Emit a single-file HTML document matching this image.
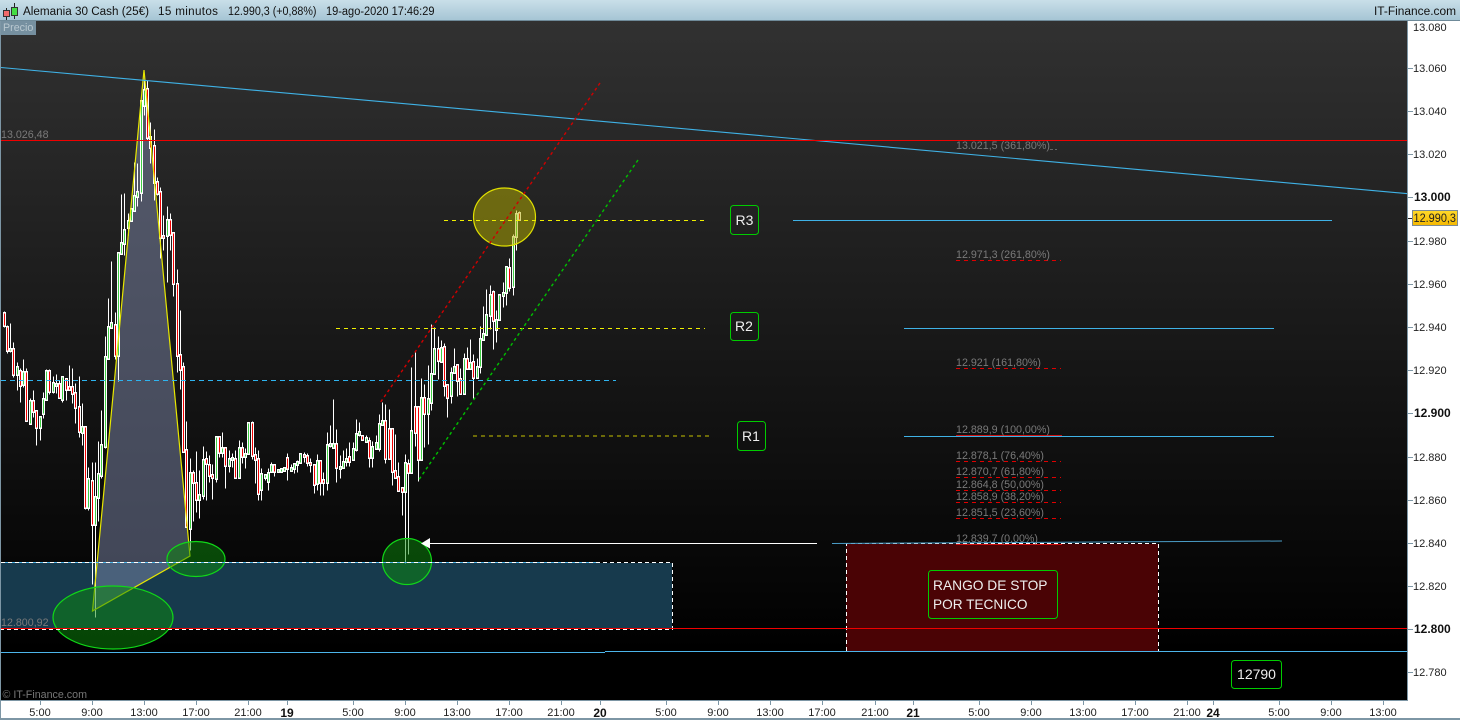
<!DOCTYPE html>
<html lang="es">
<head>
<meta charset="utf-8">
<title>Alemania 30 Cash</title>
<style>
html,body{margin:0;padding:0;background:#fff;width:1460px;height:720px;overflow:hidden}
svg{display:block;font-family:"Liberation Sans",sans-serif}
.ax{font-size:11px;fill:#222;text-anchor:middle}
.axb{font-size:12px;fill:#111;font-weight:bold;text-anchor:middle}
.pr{font-size:11px;fill:#222}
.fb{font-size:10.7px;fill:#7a7a7a}
.ti{font-size:11.65px;fill:#111}
.bx{fill:none;stroke:#0c0;stroke-width:1}
.wt{font-size:14px;fill:#eee}
</style>
</head>
<body>
<svg width="1460" height="720" viewBox="0 0 1460 720" xmlns="http://www.w3.org/2000/svg">
<defs>
<linearGradient id="bg" x1="0" y1="21" x2="0" y2="652" gradientUnits="userSpaceOnUse"><stop offset="0" stop-color="#313131"/><stop offset="1" stop-color="#000"/></linearGradient>
<linearGradient id="top" x1="0" y1="0" x2="0" y2="20" gradientUnits="userSpaceOnUse"><stop offset="0" stop-color="#c9dfe9"/><stop offset="1" stop-color="#a6c5d5"/></linearGradient>
<linearGradient id="gold" x1="0" y1="0" x2="0" y2="1"><stop offset="0" stop-color="#ffd92a"/><stop offset="1" stop-color="#f5b800"/></linearGradient>
<path id="G" d="M10 349V350M17 367V374M23 372V384M30 401V423M40 417V427M43 399V413M46 371V399M53 383V391M56 384V385M62 377V399M82 427V432M88 479V507M95 497V524M98 474V497M101 445V475M105 357V446M108 327V358M111 323V327M118 253V355M121 243V253M124 230V243M128 221V227M131 209V220M134 196V210M137 192V196M141 101V192M144 90V105M167 220V235M190 473V528M199 495V499M203 460V495M216 437V478M222 448V452M229 459V465M232 458V459M239 448V477M245 454V456M248 423V453M261 474V489M265 475V477M268 473V481M271 465V471M278 470V471M281 469V471M284 468V470M291 468V470M294 464V468M297 462V464M300 454V462M317 461V483M327 445V482M330 444V445M333 444V447M340 467V468M343 462V467M346 459V461M353 449V459M356 434V449M359 432V434M366 438V441M372 447V457M376 443V448M379 424V448M382 421V424M405 463V491M411 431V472M421 398V459M428 399V413M431 374V402M434 349V373M441 348V361M451 373V395M454 367V372M464 359V393M470 363V368M477 367V377M480 339V366M483 334V339M486 315V334M490 295V315M496 320V329M499 295V319M503 293V295M506 267V292M513 237V286M516 214V236"/>
<path id="R" d="M4 313V325M7 327V350M13 349V374M20 371V385M26 372V420M33 401V411M36 411V427M49 371V391M59 384V397M66 379V389M69 387V389M72 387V393M75 393V407M79 407V431M85 427V507M92 481V524M115 325V355M147 89V137M150 137V147M154 146V182M157 182V193M160 192V237M163 236V237M170 220V234M173 233V283M177 284V355M180 355V369M183 367V451M186 450V526M193 473V482M196 483V499M206 459V463M209 465V475M212 475V477M219 437V452M225 448V465M235 459V477M242 448V456M252 423V455M255 455V459M258 459V493M274 465V471M287 458V468M304 455V456M307 456V462M310 463V464M314 465V484M320 461V482M323 480V482M336 444V467M349 457V461M362 436V439M369 441V457M385 421V458M389 429V458M392 429V471M395 471V477M398 477V490M402 488V491M408 464V472M415 407V432M418 407V459M424 398V413M438 349V360M444 347V385M447 385V397M457 365V380M460 379V393M467 359V368M473 362V377M493 292V320M509 268V287M519 213V219"/>
</defs>

<rect x="0" y="0" width="1460" height="720" fill="#fff"/>
<rect x="1" y="21" width="1407" height="680" fill="url(#bg)"/>
<rect x="0" y="20" width="1" height="699" fill="#7d96a5"/>

<!-- title bar -->
<rect x="0" y="0" width="1460" height="20" fill="url(#top)"/>
<rect x="0" y="20" width="1460" height="1" fill="#6f8a99"/>
<path d="M6.5 8V20M14.5 3V19" stroke="#222" stroke-width="1"/>
<rect x="3.5" y="10.5" width="6" height="6" fill="#f06a6a" stroke="#333"/>
<rect x="11.5" y="7.5" width="6" height="8" fill="#44dd44" stroke="#333"/>
<text class="ti" x="23" y="15" textLength="126" lengthAdjust="spacingAndGlyphs">Alemania 30 Cash (25€)</text>
<text class="ti" x="158" y="15" textLength="60" lengthAdjust="spacing">15 minutos</text>
<text class="ti" x="228" y="15" textLength="88.500" lengthAdjust="spacingAndGlyphs">12.990,3 (+0,88%)</text>
<text class="ti" x="326" y="15" textLength="108.500" lengthAdjust="spacingAndGlyphs">19-ago-2020 17:46:29</text>
<text class="ti" x="1374" y="15" textLength="82" lengthAdjust="spacingAndGlyphs">IT-Finance.com</text>

<!-- Precio tag -->
<rect x="1" y="21" width="35" height="14" fill="#7690a0"/>
<text x="3" y="31" font-size="10.7" fill="#b9c8d0">Precio</text>

<!-- zones -->
<rect x="1" y="563" width="671" height="66" fill="#173a4d"/>
<rect x="846" y="544" width="312" height="107" fill="#4a0305"/>

<!-- triangle fill -->
<polygon points="144,70 92.500,611 190,556" fill="#7d87aa" fill-opacity=".5"/>

<!-- candles -->
<g transform="translate(.5 .5)" fill="none" shape-rendering="crispEdges">
<path stroke="#fff" stroke-width="1" d="M4 311V327M7 325V353M10 323V352M13 342V377M17 362V390M20 368V402M23 359V387M26 368V421M30 398V424M33 390V417M36 410V445M40 416V440M43 392V418M46 369V400M49 369V394M53 376V393M56 374V393M59 380V398M62 376V402M66 378V400M69 365V390M72 368V403M75 383V423M79 376V437M82 403V445M85 426V509M88 467V510M92 462V584M95 462V617M98 441V521M101 410V478M105 336V448M108 298V359M111 261V328M115 312V359M118 253V381M121 194V254M124 193V255M128 213V235M131 208V221M134 162V211M137 163V206M141 100V201M144 80V115M147 80V140M150 122V163M154 129V200M157 177V195M160 187V258M163 215V250M167 206V282M170 213V250M173 232V296M177 269V372M180 310V389M183 362V452M186 421V527M190 458V550M193 470V521M196 451V512M199 470V518M203 446V499M206 451V500M209 455V482M212 464V499M216 436V482M219 436V457M222 432V457M225 447V488M229 450V472M232 453V467M235 450V478M239 440V478M242 442V463M245 448V468M248 422V454M252 421V459M255 447V483M258 450V500M261 468V500M265 474V480M268 468V490M271 462V472M274 464V476M278 469V472M281 468V472M284 467V471M287 453V480M291 464V471M294 463V473M297 460V472M300 453V463M304 452V462M307 453V466M310 458V472M314 465V493M317 454V490M320 461V495M323 472V495M327 432V490M330 425V447M333 399V448M336 429V482M340 455V478M343 450V468M346 448V466M349 442V466M353 442V460M356 419V451M359 422V436M362 435V440M366 435V442M369 437V467M372 441V467M376 435V449M379 414V451M382 402V425M385 404V463M389 409V459M392 428V485M395 434V478M398 462V491M402 487V515M405 454V563M408 459V554M411 367V473M415 352V446M418 406V481M421 378V460M424 384V447M428 365V444M431 324V410M434 327V374M438 336V379M441 340V362M444 343V396M447 384V417M451 367V403M454 348V373M457 364V396M460 368V394M464 353V394M467 347V369M470 339V369M473 354V398M477 358V378M480 326V373M483 306V340M486 289V335M490 285V329M493 290V349M496 310V342M499 294V320M503 282V307M506 266V305M509 258V291M513 234V295M516 210V250M519 211V220"/>
<use href="#G" stroke="#fff" stroke-width="3" stroke-linecap="square"/>
<use href="#R" stroke="#fff" stroke-width="3" stroke-linecap="square"/>
<use href="#G" stroke="#3fcf45" stroke-width="1"/>
<use href="#R" stroke="#f00000" stroke-width="1"/>
</g>

<!-- triangle stroke -->
<polygon points="144,70 92.500,611 190,556" fill="none" stroke="#e8e800" stroke-width="1.200"/>

<!-- ellipses -->
<ellipse cx="113" cy="617.500" rx="60" ry="31.500" fill="#0a8a0a" fill-opacity=".5" stroke="#10d818" stroke-width="1.200"/>
<ellipse cx="196" cy="559" rx="29" ry="17.500" fill="#0a8a0a" fill-opacity=".5" stroke="#10d818" stroke-width="1.200"/>
<ellipse cx="407" cy="561.500" rx="24.500" ry="23" fill="#0a8a0a" fill-opacity=".5" stroke="#10d818" stroke-width="1.200"/>
<ellipse cx="504.500" cy="217" rx="31" ry="29" fill="#b8b000" fill-opacity=".5" stroke="#e0e000" stroke-width="1.200"/>

<!-- zone outlines -->
<path d="M1 562.500H597" stroke="#4db5e8" fill="none"/>
<path d="M1 562.500H672.500V629.500H1" fill="none" stroke="#fff" stroke-dasharray="4 3"/>
<path d="M846.500 651V543.500H1158.500V651" fill="none" stroke="#fff" stroke-dasharray="4 3"/>

<!-- horizontal lines -->
<path d="M1 67.500L1408 193.700" stroke="#3fb2e6" stroke-width="1.100" fill="none"/>
<path d="M1 140.500H1408M1 628.500H1408" stroke="#f00000" fill="none"/>
<path d="M1 380.500H616" stroke="#2eb4f0" stroke-dasharray="5 4" fill="none"/>
<path d="M1 652.500H605M605 651.500H1408" stroke="#4db5ea" fill="none"/>
<path d="M793 220.500H1332M904 328.500H1274M904 436.500H1274" stroke="#3fb2e6" fill="none"/>
<path d="M832 543.500L1282 541" stroke="#4a9cc6" fill="none"/>

<!-- yellow dashed -->
<path d="M444 220.500H705M336 328.500H705" stroke="#f0f000" stroke-dasharray="4 4" fill="none"/>
<path d="M473 436H710" stroke="#c8c400" stroke-dasharray="4 4" fill="none"/>

<!-- channel -->
<path d="M600 83L380 403" stroke="#d00000" stroke-dasharray="3 3" stroke-width="1.400" fill="none"/>
<path d="M638 160L418 481" stroke="#00c000" stroke-dasharray="3 3" stroke-width="1.400" fill="none"/>

<!-- arrow -->
<path d="M430 543.500H817" stroke="#fff" fill="none"/>
<polygon points="421,543.500 430,538 430,548.500" fill="#fff"/>

<!-- fib -->
<path d="M1050 149.500H1057" stroke="#666" stroke-dasharray="3 2" fill="none"/>
<path d="M956 260.500H1061M956 368.500H1061M956 461.500H1061M956 477.500H1061M956 490.500H1061M956 502.500H1061M956 518.500H1061" stroke="#e00000" stroke-dasharray="4 4" fill="none"/>
<path d="M956 435.500H1062M956 544.500H1062" stroke="#d01010" fill="none"/>
<text class="fb" x="956" y="149">13.021,5 (361,80%)</text>
<text class="fb" x="956" y="258">12.971,3 (261,80%)</text>
<text class="fb" x="956" y="366">12.921 (161,80%)</text>
<text class="fb" x="956" y="433">12.889,9 (100,00%)</text>
<text class="fb" x="956" y="459">12.878,1 (76,40%)</text>
<text class="fb" x="956" y="475">12.870,7 (61,80%)</text>
<text class="fb" x="956" y="488">12.864,8 (50,00%)</text>
<text class="fb" x="956" y="500">12.858,9 (38,20%)</text>
<text class="fb" x="956" y="516">12.851,5 (23,60%)</text>
<text class="fb" x="956" y="542">12.839,7 (0,00%)</text>

<text class="fb" x="1" y="138">13.026,48</text>
<text class="fb" x="1" y="626">12.800,92</text>
<text x="2.500" y="698" font-size="10.7" fill="#777">© IT-Finance.com</text>

<!-- boxes -->
<rect class="bx" x="730.500" y="205.500" width="28" height="29" rx="3"/>
<text class="wt" x="744.500" y="225" text-anchor="middle">R3</text>
<rect class="bx" x="730.500" y="312.500" width="28" height="28" rx="3"/>
<text class="wt" x="744" y="331" text-anchor="middle">R2</text>
<rect class="bx" x="737.500" y="421.500" width="28" height="29" rx="3"/>
<text class="wt" x="751" y="441" text-anchor="middle">R1</text>
<rect class="bx" x="928.500" y="570.500" width="129" height="48" rx="3"/>
<text class="wt" x="933" y="590" textLength="114.500" lengthAdjust="spacingAndGlyphs">RANGO DE STOP</text>
<text class="wt" x="933" y="609" textLength="94.500" lengthAdjust="spacingAndGlyphs">POR TECNICO</text>
<rect class="bx" x="1231.500" y="660.500" width="50" height="28" rx="3"/>
<text class="wt" x="1256.500" y="679" text-anchor="middle">12790</text>

<!-- right axis -->
<rect x="1408" y="21" width="52" height="699" fill="#fff"/>
<rect x="1407" y="21" width="1" height="680" fill="#7d96a5"/>
<path d="M1408 68.500h5M1408 111.500h5M1408 154.500h5M1408 197.500h5M1408 241.500h5M1408 284.500h5M1408 327.500h5M1408 370.500h5M1408 413.500h5M1408 457.500h5M1408 500.500h5M1408 543.500h5M1408 586.500h5M1408 629.500h5M1408 672.500h5" stroke="#7d96a5" fill="none"/>
<path d="M1408 218.500h4" stroke="#222" fill="none"/>
<text class="pr" x="1413" y="31">13.080</text>
<text class="pr" x="1413" y="72">13.060</text>
<text class="pr" x="1413" y="115">13.040</text>
<text class="pr" x="1413" y="158">13.020</text>
<text x="1414" y="201" font-size="12" font-weight="bold" fill="#111">13.000</text>
<text class="pr" x="1413" y="245">12.980</text>
<text class="pr" x="1413" y="288">12.960</text>
<text class="pr" x="1413" y="331">12.940</text>
<text class="pr" x="1413" y="374">12.920</text>
<text x="1414" y="417" font-size="12" font-weight="bold" fill="#111">12.900</text>
<text class="pr" x="1413" y="461">12.880</text>
<text class="pr" x="1413" y="504">12.860</text>
<text class="pr" x="1413" y="547">12.840</text>
<text class="pr" x="1413" y="590">12.820</text>
<text x="1414" y="633" font-size="12" font-weight="bold" fill="#111">12.800</text>
<text class="pr" x="1413" y="676">12.780</text>
<rect x="1412.500" y="210.500" width="45" height="15" fill="url(#gold)" stroke="#7d8b94"/>
<text x="1413.500" y="222" font-size="11.500" fill="#222" textLength="42.500" lengthAdjust="spacingAndGlyphs">12.990,3</text>

<!-- bottom axis -->
<rect x="1" y="701" width="1407" height="17" fill="#fff"/>
<rect x="0" y="700" width="1408" height="1" fill="#7d96a5"/>
<rect x="0" y="718" width="1460" height="2" fill="#7d96a5"/>
<path d="M40.500 701v4M92.500 701v4M144.500 701v4M196.500 701v4M248.500 701v4M287.500 701v4M353.500 701v4M405.500 701v4M457.500 701v4M509.500 701v4M561.500 701v4M600.500 701v4M666.500 701v4M718.500 701v4M770.500 701v4M822.500 701v4M875.500 701v4M913.500 701v4M979.500 701v4M1031.500 701v4M1083.500 701v4M1135.500 701v4M1187.500 701v4M1213.500 701v4M1279.500 701v4M1331.500 701v4M1383.500 701v4" stroke="#7d96a5" fill="none"/>
<text class="ax" x="40" y="716">5:00</text><text class="ax" x="92" y="716">9:00</text><text class="ax" x="144" y="716">13:00</text><text class="ax" x="196" y="716">17:00</text><text class="ax" x="248" y="716">21:00</text><text class="axb" x="287" y="717">19</text>
<text class="ax" x="353" y="716">5:00</text><text class="ax" x="405" y="716">9:00</text><text class="ax" x="457" y="716">13:00</text><text class="ax" x="509" y="716">17:00</text><text class="ax" x="561" y="716">21:00</text><text class="axb" x="600" y="717">20</text>
<text class="ax" x="666" y="716">5:00</text><text class="ax" x="718" y="716">9:00</text><text class="ax" x="770" y="716">13:00</text><text class="ax" x="822" y="716">17:00</text><text class="ax" x="875" y="716">21:00</text><text class="axb" x="913" y="717">21</text>
<text class="ax" x="979" y="716">5:00</text><text class="ax" x="1031" y="716">9:00</text><text class="ax" x="1083" y="716">13:00</text><text class="ax" x="1135" y="716">17:00</text><text class="ax" x="1187" y="716">21:00</text><text class="axb" x="1213" y="717">24</text>
<text class="ax" x="1279" y="716">5:00</text><text class="ax" x="1331" y="716">9:00</text><text class="ax" x="1383" y="716">13:00</text>
</svg>
</body>
</html>
